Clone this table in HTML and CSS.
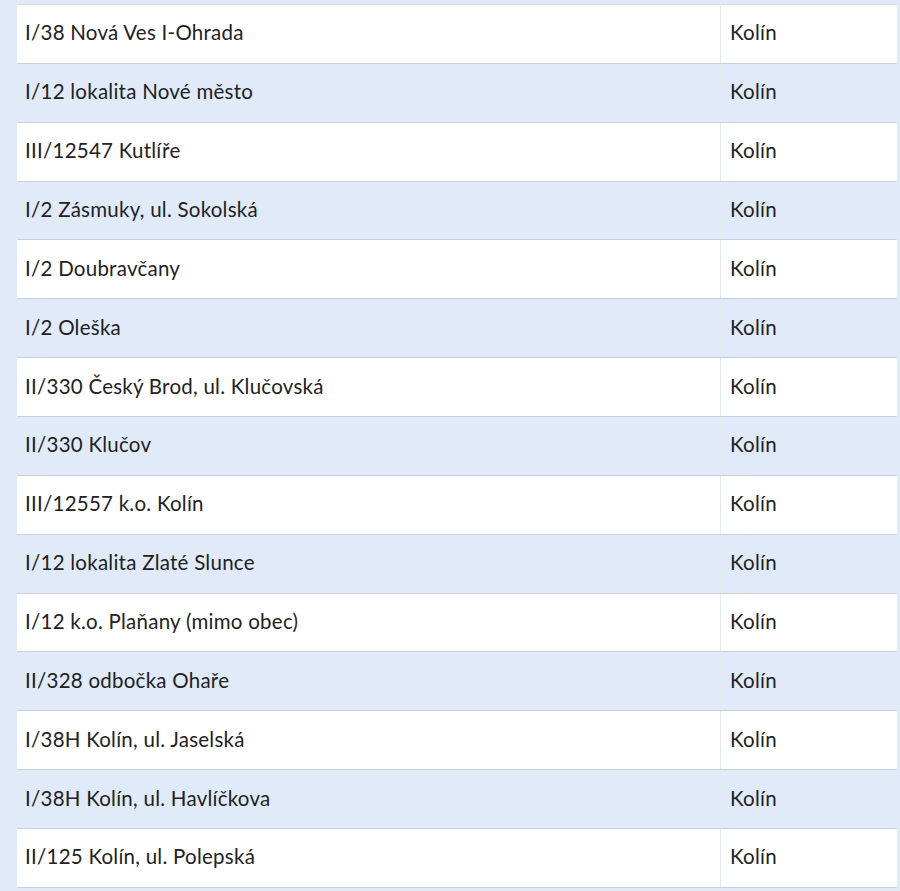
FILE: index.html
```html
<!DOCTYPE html>
<html lang="cs">
<head>
<meta charset="utf-8">
<link rel="stylesheet" href="styles.css">
</head>
<body>
<div class="wrap">
<table class="list">
<tbody>
<tr><td class="name">I/38 Nová Ves I-Ohrada</td><td class="city">Kolín</td></tr>
<tr class="alt"><td class="name">I/12 lokalita Nové město</td><td class="city">Kolín</td></tr>
<tr><td class="name">III/12547 Kutlíře</td><td class="city">Kolín</td></tr>
<tr class="alt"><td class="name">I/2 Zásmuky, ul. Sokolská</td><td class="city">Kolín</td></tr>
<tr><td class="name">I/2 Doubravčany</td><td class="city">Kolín</td></tr>
<tr class="alt"><td class="name">I/2 Oleška</td><td class="city">Kolín</td></tr>
<tr><td class="name">II/330 Český Brod, ul. Klučovská</td><td class="city">Kolín</td></tr>
<tr class="alt"><td class="name">II/330 Klučov</td><td class="city">Kolín</td></tr>
<tr><td class="name">III/12557 k.o. Kolín</td><td class="city">Kolín</td></tr>
<tr class="alt"><td class="name">I/12 lokalita Zlaté Slunce</td><td class="city">Kolín</td></tr>
<tr><td class="name">I/12 k.o. Plaňany (mimo obec)</td><td class="city">Kolín</td></tr>
<tr class="alt"><td class="name">II/328 odbočka Ohaře</td><td class="city">Kolín</td></tr>
<tr><td class="name">I/38H Kolín, ul. Jaselská</td><td class="city">Kolín</td></tr>
<tr class="alt"><td class="name">I/38H Kolín, ul. Havlíčkova</td><td class="city">Kolín</td></tr>
<tr><td class="name">II/125 Kolín, ul. Polepská</td><td class="city">Kolín</td></tr>
</tbody>
</table>
</div>
</body>
</html>
```
FILE: styles.css
```css
html, body {
  margin: 0;
  padding: 0;
  background: #e0eaf8;
}
.wrap {
  padding: 4px 3px 0 17px;
}
.list {
  width: 880px;
  border-collapse: collapse;
  font-family: "Lato", "Noto Sans", sans-serif;
  font-size: 20.5px;
  letter-spacing: 0.25px;
  color: #222;
  border-top: 1px solid #d3dae3;
}
.list tr {
  height: 58.86px;
}
.list td {
  padding: 0 8px 3px;
  vertical-align: middle;
  border-bottom: 1px solid #c9d0da;
  background: #fff;
}
.list tr.alt td {
  background: #e0eaf8;
}
.list td.name {
  width: 687px;
}
.list td.city {
  border-left: 1px solid #e3e9f1;
  padding-left: 9px;
}
```
